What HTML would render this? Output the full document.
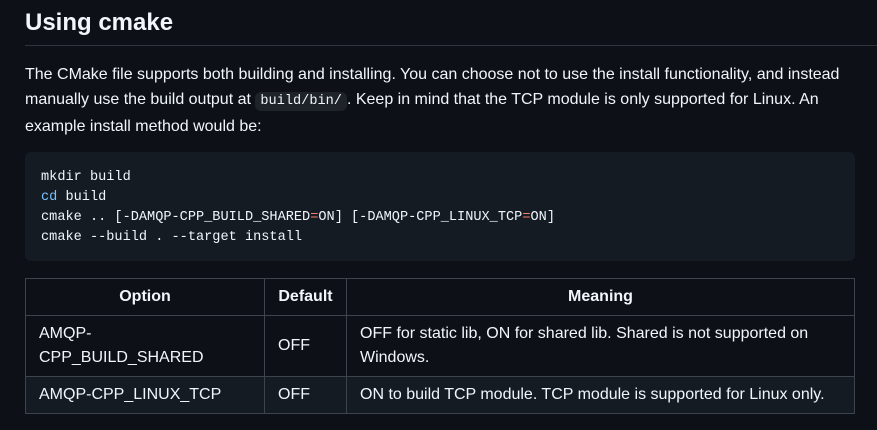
<!DOCTYPE html>
<html><head><style>
body{margin:0;background:#0d1117;color:#f0f6fc;font-family:"Liberation Sans",sans-serif;width:877px;height:430px;overflow:hidden;}
h2{position:absolute;left:25px;top:1px;width:860px;margin:0;font-size:24px;font-weight:bold;line-height:44px;height:44px;border-bottom:1px solid #3d444db3;}
p{position:absolute;left:25px;top:62px;width:830px;margin:0;font-size:16px;line-height:25px;color:#f0f6fc;}
code{font-family:"Liberation Mono",monospace;font-size:13.6px;background:#656c7633;padding:2px 5px;border-radius:6px;}
pre{position:absolute;left:25px;top:152px;width:798px;height:77px;margin:0;padding:16px;background:#151b23;border-radius:6px;font-family:"Liberation Mono",monospace;font-size:13.6px;line-height:20px;color:#f0f6fc;}
.b{color:#79c0ff}.r{color:#ff7b72}
table{position:absolute;left:25px;top:278px;width:830px;border-collapse:collapse;font-size:16px;}
td,th{border:1px solid #3d444d;padding:6px 13px;line-height:24px;text-align:left;}
th{text-align:center;font-weight:bold;height:24px;}
tr.e{background:#151b23;}
</style></head><body>
<h2>Using cmake</h2>
<p>The CMake file supports both building and installing. You can choose not to use the install functionality, and instead manually use the build output at <code>build/bin/</code>. Keep in mind that the TCP module is only supported for Linux. An example install method would be:</p>
<pre>mkdir build
<span class="b">cd</span> build
cmake .. [-DAMQP-CPP_BUILD_SHARED<span class="r">=</span>ON] [-DAMQP-CPP_LINUX_TCP<span class="r">=</span>ON]
cmake --build . --target install</pre>
<table>
<tr><th style="width:212px">Option</th><th style="width:55px">Default</th><th>Meaning</th></tr>
<tr><td style="height:48px">AMQP-<br>CPP_BUILD_SHARED</td><td>OFF</td><td>OFF for static lib, ON for shared lib. Shared is not supported on Windows.</td></tr>
<tr class="e"><td>AMQP-CPP_LINUX_TCP</td><td>OFF</td><td>ON to build TCP module. TCP module is supported for Linux only.</td></tr>
</table>
</body></html>
